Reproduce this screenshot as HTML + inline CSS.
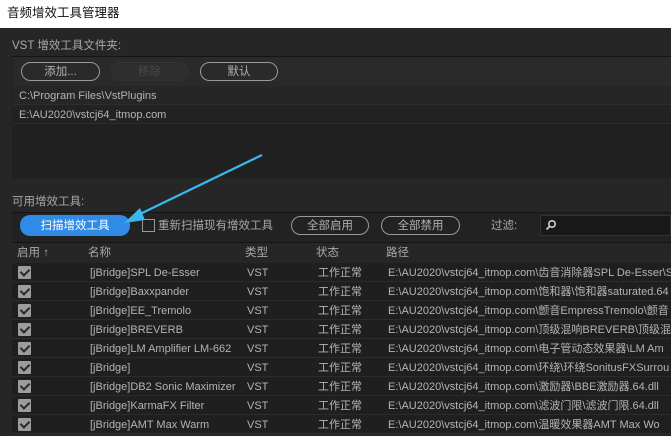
<!DOCTYPE html>
<html><head><meta charset="utf-8"><style>
*{margin:0;padding:0;box-sizing:border-box}
body{width:671px;height:436px;overflow:hidden;background:#262626;font-family:"Liberation Sans","Noto Sans CJK SC",sans-serif;font-size:11.5px;line-height:14px;color:#a8a8a8;position:relative}
.a{position:absolute;white-space:nowrap}
.title{left:0;top:0;width:671px;height:28px;background:#fff;color:#111;font-size:12.5px;line-height:16px;padding:5px 0 0 7px}
.btn{position:absolute;height:19px;border:1.5px solid #9a9a9a;border-radius:10px;display:flex;align-items:center;justify-content:center;color:#b0b0b0;white-space:nowrap;line-height:12px;padding-top:1px}
.row{position:absolute;left:12px;width:659px;height:19px;border-bottom:1px solid #2c2c2c;background:#1f1f1f;overflow:hidden;white-space:nowrap;font-size:11px}
.row span{position:absolute;top:3px;color:#b4b4b4;white-space:nowrap;line-height:14px}
.cb{position:absolute;left:6px;top:3px;width:13px;height:13px;background:#9c9c9c;border-radius:1px}
.cb:after{content:"";position:absolute;left:4px;top:1px;width:4px;height:7px;border:solid #2a2a2a;border-width:0 2px 2px 0;transform:rotate(45deg)}
</style></head><body>
<div class="a title">音频增效工具管理器</div>
<div class="a" style="left:12px;top:39px">VST 增效工具文件夹:</div>
<div class="a" style="left:12px;top:56px;width:659px;height:122px;background:#202020;border-top:1px solid #141414"></div>
<div class="a" style="left:13px;top:57px;width:658px;height:29px;background:#2a2a2a"></div>
<div class="btn" style="left:21px;top:62px;width:79px">添加...</div>
<div class="btn" style="left:111px;top:62px;width:77px;border-color:#333;background:#2e2e2e;color:#4a4a4a">移除</div>
<div class="btn" style="left:200px;top:62px;width:78px">默认</div>
<div class="a" style="left:13px;top:86px;width:658px;height:19px;background:#262626;border-bottom:1px solid #2e2e2e;padding:3px 0 0 6px;color:#b4b4b4;font-size:11px">C:\Program Files\VstPlugins</div>
<div class="a" style="left:13px;top:105px;width:658px;height:19px;background:#222;border-bottom:1px solid #2e2e2e;padding:3px 0 0 6px;color:#b4b4b4;font-size:11px">E:\AU2020\vstcj64_itmop.com</div>
<div class="a" style="left:12px;top:195px">可用增效工具:</div>
<div class="a" style="left:12px;top:212px;width:659px;height:31px;background:#222;border-top:1px solid #141414;border-bottom:1px solid #141414"></div>
<div class="btn" style="left:20px;top:215px;width:110px;height:21px;background:#2f8be6;border:none;color:#fff">扫描增效工具</div>
<div class="a" style="left:142px;top:219px;width:13px;height:13px;border:1.5px solid #999"></div>
<div class="a" style="left:158px;top:219px">重新扫描现有增效工具</div>
<div class="btn" style="left:291px;top:216px;width:78px">全部启用</div>
<div class="btn" style="left:381px;top:216px;width:79px">全部禁用</div>
<div class="a" style="left:491px;top:219px">过滤:</div>
<div class="a" style="left:540px;top:215px;width:131px;height:21px;background:#191919;border:1px solid #333"></div>
<svg class="a" style="left:545px;top:219px" width="12" height="12"><circle cx="7" cy="5" r="3.2" fill="none" stroke="#ccc" stroke-width="1.6"/><line x1="4.6" y1="7.4" x2="1.5" y2="10.5" stroke="#ccc" stroke-width="1.8"/></svg>
<div class="a" style="left:12px;top:243px;width:659px;height:20px;background:#262626"></div>
<div class="a" style="left:17px;top:246px">启用 ↑</div>
<div class="a" style="left:88px;top:246px">名称</div>
<div class="a" style="left:245px;top:246px">类型</div>
<div class="a" style="left:316px;top:246px">状态</div>
<div class="a" style="left:386px;top:246px">路径</div>

<div class="row" style="top:263px"><div class="cb"></div><span style="left:78px">[jBridge]SPL De-Esser</span><span style="left:235px">VST</span><span style="left:306px">工作正常</span><span style="left:376px">E:\AU2020\vstcj64_itmop.com\齿音消除器SPL De-Esser\SPL</span></div>
<div class="row" style="top:282px"><div class="cb"></div><span style="left:78px">[jBridge]Baxxpander</span><span style="left:235px">VST</span><span style="left:306px">工作正常</span><span style="left:376px">E:\AU2020\vstcj64_itmop.com\饱和器\饱和器saturated.64</span></div>
<div class="row" style="top:301px"><div class="cb"></div><span style="left:78px">[jBridge]EE_Tremolo</span><span style="left:235px">VST</span><span style="left:306px">工作正常</span><span style="left:376px">E:\AU2020\vstcj64_itmop.com\颤音EmpressTremolo\颤音</span></div>
<div class="row" style="top:320px"><div class="cb"></div><span style="left:78px">[jBridge]BREVERB</span><span style="left:235px">VST</span><span style="left:306px">工作正常</span><span style="left:376px">E:\AU2020\vstcj64_itmop.com\顶级混响BREVERB\顶级混</span></div>
<div class="row" style="top:339px"><div class="cb"></div><span style="left:78px">[jBridge]LM Amplifier LM-662</span><span style="left:235px">VST</span><span style="left:306px">工作正常</span><span style="left:376px">E:\AU2020\vstcj64_itmop.com\电子管动态效果器\LM Am</span></div>
<div class="row" style="top:358px"><div class="cb"></div><span style="left:78px">[jBridge]</span><span style="left:235px">VST</span><span style="left:306px">工作正常</span><span style="left:376px">E:\AU2020\vstcj64_itmop.com\环绕\环绕SonitusFXSurrou</span></div>
<div class="row" style="top:377px"><div class="cb"></div><span style="left:78px">[jBridge]DB2 Sonic Maximizer</span><span style="left:235px">VST</span><span style="left:306px">工作正常</span><span style="left:376px">E:\AU2020\vstcj64_itmop.com\激励器\BBE激励器.64.dll</span></div>
<div class="row" style="top:396px"><div class="cb"></div><span style="left:78px">[jBridge]KarmaFX Filter</span><span style="left:235px">VST</span><span style="left:306px">工作正常</span><span style="left:376px">E:\AU2020\vstcj64_itmop.com\滤波门限\滤波门限.64.dll</span></div>
<div class="row" style="top:415px"><div class="cb"></div><span style="left:78px">[jBridge]AMT Max Warm</span><span style="left:235px">VST</span><span style="left:306px">工作正常</span><span style="left:376px">E:\AU2020\vstcj64_itmop.com\温暖效果器AMT Max Wo</span></div>

<svg class="a" style="left:0;top:0" width="671" height="436"><line x1="262" y1="155" x2="138" y2="215" stroke="#3ab8ee" stroke-width="2.2"/><polygon points="124,223 140,208 145,220" fill="#3ab8ee"/></svg>
</body></html>
